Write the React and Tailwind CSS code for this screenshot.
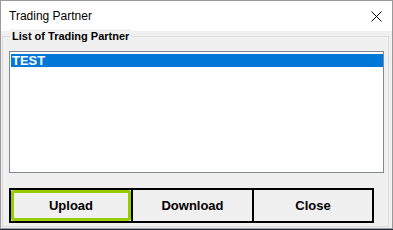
export default function App() {
  const partners = ["TEST"]
  const selected = 0

  return (
    <div className="w-[393px] h-[230px] bg-[#1f2937]">
      <div className="w-[393px] h-[229px] border border-[#9a9a9a] bg-[#f0f0f0] flex flex-col font-['Liberation_Sans',sans-serif]">
        {/* Title bar */}
        <div className="h-[30px] bg-white flex items-center justify-between pl-[8px] pr-[9px] shrink-0">
          <span className="text-[12px] text-black leading-none">Trading Partner</span>
          <svg width="11" height="11" viewBox="0 0 11 11" className="mr-[1px]">
            <path d="M0.5 0.5L10.5 10.5M10.5 0.5L0.5 10.5" stroke="#000" strokeWidth="1" fill="none" />
          </svg>
        </div>

        {/* Group box */}
        <div className="px-[1px] pt-[5px] flex-1 flex flex-col">
          <div className="relative border border-[#dcdcdc] w-[387px] h-[191px] pl-[6px] pr-[4px] pt-[14px]">
            <span className="absolute -top-[8px] left-[7px] bg-[#f0f0f0] px-[2px] text-[11px] font-bold text-black leading-[14px]">
              List of Trading Partner
            </span>

            {/* List box */}
            <div className="h-[122px] w-[375px] bg-white border border-[#828790] pt-[2px] pl-[1px]">
              {partners.map((p, i) => (
                <div
                  key={p}
                  className={
                    i === selected
                      ? "h-[13px] bg-[#0078d7] text-white text-[13px] font-bold leading-[13px] pl-[1px]"
                      : "h-[13px] text-black text-[13px] font-bold leading-[13px] pl-[1px]"
                  }
                >
                  {p}
                </div>
              ))}
            </div>

            {/* Buttons */}
            <div className="mt-[15px] w-[365px] h-[35px] flex border-2 border-black">
              <button className="w-[120px] h-full border-[3px] border-[#99cc00] rounded-[3px] text-[13px] font-bold text-black">
                Upload
              </button>
              <button className="w-[121px] h-full border-l-2 border-black text-[13px] font-bold text-black">
                Download
              </button>
              <button className="flex-1 h-full border-l-2 border-black text-[13px] font-bold text-black">
                Close
              </button>
            </div>
          </div>
        </div>
      </div>
    </div>
  )
}
